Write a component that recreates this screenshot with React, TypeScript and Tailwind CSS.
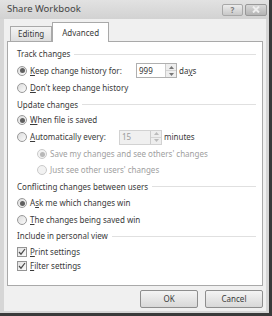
import React from 'react'

const font = { fontFamily: '"Noto Sans", "Open Sans", sans-serif' }

const Radio = ({ checked = false, disabled = false }: { checked?: boolean; disabled?: boolean }) => (
  <span
    className={`flex h-[10px] w-[10px] shrink-0 items-center justify-center rounded-full border ${
      disabled ? 'border-[#cacaca] bg-[#f2f2f2]' : 'border-[#999] bg-gradient-to-br from-[#dcdcdc] to-[#fbfbfb]'
    }`}
  >
    {checked && (
      <span className={`h-[5px] w-[5px] rounded-full ${disabled ? 'bg-[#b8b8b8]' : 'bg-[#606060]'}`} />
    )}
  </span>
)

const Check = () => (
  <span className="flex h-[10px] w-[10px] shrink-0 items-center justify-center border border-[#949494] bg-gradient-to-br from-[#e2e2e2] to-[#fbfbfb]">
    <svg width="8" height="8" viewBox="0 0 8 8">
      <path d="M1 4 L3 6.2 L7 1" fill="none" stroke="#4a4a4a" strokeWidth="1.2" />
    </svg>
  </span>
)

const Group = ({ title, h = 'h-[16px]' }: { title: string; h?: string }) => (
  <div className={`flex ${h} items-center gap-[4px] pr-[6px]`}>
    <span className="whitespace-nowrap">{title}</span>
    <span className="h-px flex-1 bg-[#e0e0e0]" />
  </div>
)

const Spin = ({ value, disabled = false, w }: { value: string; disabled?: boolean; w: string }) => (
  <div className={`flex h-[15px] border ${disabled ? 'border-[#d2d2d2]' : 'border-[#b0b0b0]'}`}>
    <div
      className={`${w} flex items-center pl-[2px] ${disabled ? 'bg-[#f0f0f0] text-[#9a9a9a]' : 'bg-white text-[#333]'}`}
    >
      {value}
    </div>
    <div className="flex w-[11px] flex-col border-l border-[#cccccc] bg-[#eeeeee]">
      <div className="flex flex-1 items-center justify-center border-b border-[#d4d4d4]">
        <svg width="5" height="3" viewBox="0 0 5 3">
          <path d="M0 3 L2.5 0 L5 3Z" fill={disabled ? '#bbb' : '#777'} />
        </svg>
      </div>
      <div className="flex flex-1 items-center justify-center">
        <svg width="5" height="3" viewBox="0 0 5 3">
          <path d="M0 0 L2.5 3 L5 0Z" fill={disabled ? '#bbb' : '#777'} />
        </svg>
      </div>
    </div>
  </div>
)

export default function App() {
  return (
    <div
      className="flex h-[316px] w-[272px] flex-col border-r-[3px] border-b-[3px] border-[#3a3a3a] bg-[#d6d6d6] text-[8px] text-[#3a3a3a]"
      style={font}
    >
      {/* title bar */}
      <div className="flex h-[19px] shrink-0 items-center justify-between bg-gradient-to-b from-[#e2e2e2] to-[#d2d2d2] pl-[7px] pr-[2px]">
        <span className="text-[9.5px] text-[#444]">Share Workbook</span>
        <div className="flex gap-[2px]">
          <div className="flex h-[12px] w-[21px] items-center justify-center rounded-[2px] border border-[#a8a8a8] bg-gradient-to-b from-[#ececec] to-[#c8c8c8] text-[8px] font-bold text-[#7a7a7a]">
            ?
          </div>
          <div className="flex h-[12px] w-[22px] items-center justify-center rounded-[2px] border border-[#989898] bg-gradient-to-b from-[#d8d8d8] to-[#b4b4b4]">
            <svg width="8" height="7" viewBox="0 0 8 7">
              <path d="M1 0.5 L7 6.5 M7 0.5 L1 6.5" stroke="#eeeeee" strokeWidth="2" />
            </svg>
          </div>
        </div>
      </div>

      {/* client */}
      <div className="ml-[4px] mr-[3px] mb-[2px] flex flex-1 flex-col bg-[#f0f0f0] pl-[3px] pr-[3px]">
        {/* tabs */}
        <div className="flex h-[22px] items-end pl-[3px]">
          <div className="flex h-[15px] items-center border border-b-0 border-[#a9a9a9] bg-gradient-to-b from-[#f4f4f4] to-[#dedede] px-[7px]">
            Editing
          </div>
          <div className="relative z-10 -mb-px flex h-[20px] items-center border border-b-0 border-[#a9a9a9] bg-white px-[9px]">
            Advanced
          </div>
        </div>

        {/* panel */}
        <div className="flex h-[245px] flex-col border border-[#a9a9a9] bg-white pt-[4px] pl-[9px]">
          <Group title="Track changes" />
          <div className="flex h-[17px] items-center">
            <Radio checked />
            <span className="ml-[3px] w-[106px]">
              <u>K</u>eep change history for:
            </span>
            <Spin value="999" w="w-[28px]" />
            <span className="ml-[2px]">
              da<u>y</u>s
            </span>
          </div>
          <div className="flex h-[18px] items-center">
            <Radio />
            <span className="ml-[3px]">
              <u>D</u>on't keep change history
            </span>
          </div>
          <Group title="Update changes" h="h-[15px]" />
          <div className="flex h-[16px] items-center">
            <Radio checked />
            <span className="ml-[3px]">
              <u>W</u>hen file is saved
            </span>
          </div>
          <div className="flex h-[18px] items-center">
            <Radio />
            <span className="ml-[3px] w-[89px]">
              <u>A</u>utomatically every:
            </span>
            <Spin value="15" disabled w="w-[30px]" />
            <span className="ml-[2px]">minutes</span>
          </div>
          <div className="flex h-[16px] items-center pl-[20px] text-[#a0a0a0]">
            <Radio checked disabled />
            <span className="ml-[3px]">Save my changes and see others' changes</span>
          </div>
          <div className="flex h-[16px] items-center pl-[20px] text-[#a0a0a0]">
            <Radio disabled />
            <span className="ml-[3px]">Just see other users' changes</span>
          </div>
          <Group title="Conflicting changes between users" h="h-[17px]" />
          <div className="flex h-[16px] items-center">
            <Radio checked />
            <span className="ml-[3px]">
              A<u>s</u>k me which changes win
            </span>
          </div>
          <div className="flex h-[17px] items-center">
            <Radio />
            <span className="ml-[3px]">
              <u>T</u>he changes being saved win
            </span>
          </div>
          <Group title="Include in personal view" />
          <div className="flex h-[15px] items-center">
            <Check />
            <span className="ml-[3px]">
              <u>P</u>rint settings
            </span>
          </div>
          <div className="flex h-[14px] items-center">
            <Check />
            <span className="ml-[3px]">
              <u>F</u>ilter settings
            </span>
          </div>
        </div>

        {/* buttons */}
        <div className="flex flex-1 items-center justify-end gap-[7px]">
          <button className="flex h-[18px] w-[58px] items-center justify-center rounded-[2px] border border-[#8e8e8e] bg-gradient-to-b from-[#f4f4f4] to-[#d8d8d8]">
            OK
          </button>
          <button className="flex h-[18px] w-[58px] items-center justify-center rounded-[2px] border border-[#8e8e8e] bg-gradient-to-b from-[#f4f4f4] to-[#d8d8d8]">
            Cancel
          </button>
        </div>
      </div>
    </div>
  )
}
